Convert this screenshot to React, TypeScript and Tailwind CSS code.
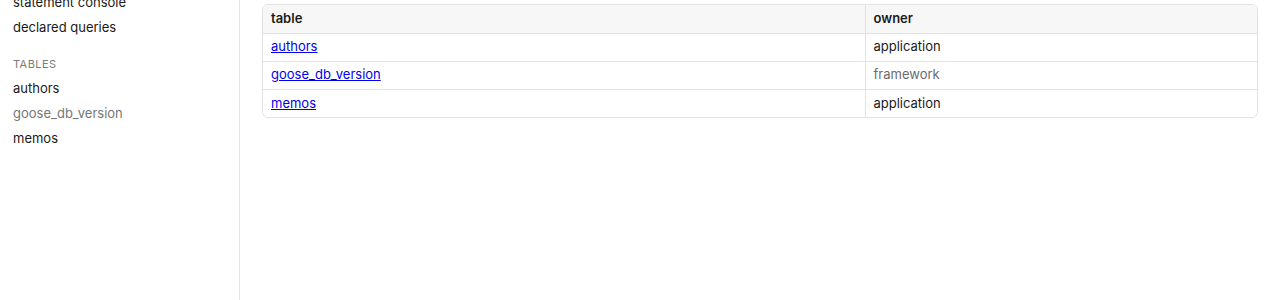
import React from 'react';

const tables = [
  { name: 'authors', owner: 'application', muted: false },
  { name: 'goose_db_version', owner: 'framework', muted: true },
  { name: 'memos', owner: 'application', muted: false },
];

function Sidebar() {
  return (
    <aside className="w-[240px] shrink-0 border-r border-[#e5e5e5] px-[13px]">
      <div className="-mt-[10px] flex flex-col">
        <div className="h-[25px] leading-[25px] text-[13px] text-[#1a1a1a]">statement console</div>
        <div className="h-[25px] leading-[25px] text-[13px] text-[#1a1a1a]">declared queries</div>
      </div>
      <div className="mt-[16px] mb-[4px] h-[16px] leading-[16px] text-[11px] uppercase tracking-[0.04em] text-[#7a7a7a]">
        Tables
      </div>
      <div className="flex flex-col">
        {tables.map((t) => (
          <div
            key={t.name}
            className={`h-[25px] leading-[25px] text-[13px] ${t.muted ? 'text-[#777777]' : 'text-[#1a1a1a]'}`}
          >
            {t.name}
          </div>
        ))}
      </div>
    </aside>
  );
}

export default function App() {
  return (
    <div className="flex h-[300px] overflow-hidden bg-white font-['Inter',sans-serif] antialiased">
      <Sidebar />
      <main className="flex-1 px-[22px] pt-[4px]">
        <div className="overflow-hidden rounded-[6px] border border-[#e3e3e3]">
          <table className="w-full border-collapse text-[13px]">
            <thead>
              <tr className="h-[28px] bg-[#f7f7f7]">
                <th className="w-[602px] border-r border-[#e3e3e3] px-[8px] text-left font-semibold text-[#1a1a1a]">table</th>
                <th className="px-[8px] text-left font-semibold text-[#1a1a1a]">owner</th>
              </tr>
            </thead>
            <tbody>
              {tables.map((t) => (
                <tr key={t.name} className="h-[28px] border-t border-[#e3e3e3]">
                  <td className="border-r border-[#e3e3e3] px-[8px]">
                    <a href="#" className="text-[#0000ee] underline">{t.name}</a>
                  </td>
                  <td className={`px-[8px] ${t.muted ? 'text-[#6b6b6b]' : 'text-[#1a1a1a]'}`}>{t.owner}</td>
                </tr>
              ))}
            </tbody>
          </table>
        </div>
      </main>
    </div>
  );
}
